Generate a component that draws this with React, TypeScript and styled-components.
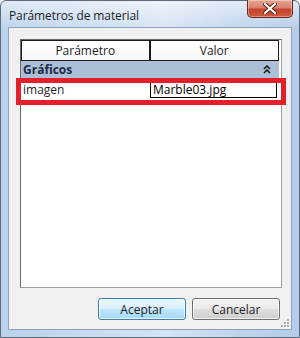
import styled, { createGlobalStyle } from "styled-components";

const GlobalStyle = createGlobalStyle`
    html, body {
        margin: 0;
        padding: 0;
        width: 300px;
        height: 338px;
        overflow: hidden;
        background: #ffffff;
    }
    * {
        box-sizing: border-box;
    }
`;

const Window = styled.div`
    width: 300px;
    height: 338px;
    display: flex;
    flex-direction: column;
    border: 1px solid #5b6b7c;
    border-radius: 6px 6px 0 0;
    background:
        linear-gradient(180deg, rgba(255,255,255,0.55) 0%, rgba(255,255,255,0) 30px),
        linear-gradient(90deg, #b9d1ea 0%, #c9dcf0 30%, #d6e4f3 55%, #bfd4ec 80%, #b4cce8 100%);
    font-family: "Open Sans", "Noto Sans", sans-serif;
`;

const TitleBar = styled.div`
    height: 26px;
    display: flex;
    align-items: flex-start;
    justify-content: space-between;
    padding-left: 8px;
    padding-right: 6px;
`;

const Title = styled.span`
    margin-top: 6px;
    font-size: 12px;
    color: #1e1e1e;
    letter-spacing: -0.1px;
`;

const CloseButton = styled.div`
    width: 46px;
    height: 18px;
    margin-top: -1px;
    display: flex;
    justify-content: center;
    align-items: center;
    border: 1px solid #6b2620;
    border-top: none;
    border-radius: 0 0 5px 5px;
    background: linear-gradient(180deg, #e8a493 0%, #d8826d 45%, #c3442c 55%, #cf5a3b 100%);
    box-shadow: inset 0 0 0 1px rgba(255,255,255,0.35);
`;

const Body = styled.div`
    flex: 1;
    margin: 0 7px 7px 7px;
    background: #f0f0f0;
    border: 1px solid #8ea3bb;
    padding: 11px 9px 0 11px;
    display: flex;
    flex-direction: column;
    position: relative;
`;

const Grid = styled.div`
    height: 249px;
    background: #ffffff;
    border: 1px solid #a0a0a0;
    border-left-color: #696969;
    border-top-color: #696969;
    display: flex;
    flex-direction: column;
    padding-right: 2px;
`;

const HeaderRow = styled.div`
    height: 21px;
    display: flex;
`;

const HeaderCell = styled.div<{ $w: number }>`
    width: ${p => p.$w}px;
    display: flex;
    align-items: center;
    justify-content: center;
    background: linear-gradient(180deg, #ffffff 0%, #f7f7f7 100%);
    border: 1px solid #1a1a1a;
    border-left: ${p => (p.$w > 130 ? "1px solid #1a1a1a" : "none")};
    font-size: 12px;
    color: #1e1e1e;
`;

const GroupRow = styled.div`
    height: 17px;
    display: flex;
    align-items: center;
    justify-content: space-between;
    padding: 0 8px 0 2px;
    background: #abbfd7;
    font-size: 12px;
    font-weight: 700;
    color: #1d2a44;
`;

const PropRow = styled.div`
    height: 23px;
    display: flex;
    align-items: center;
    border-bottom: 1px dotted #8c8c8c;
`;

const NameCell = styled.div`
    width: 129px;
    padding-left: 2px;
    font-size: 12px;
    color: #1e1e1e;
`;

const ValueInput = styled.div`
    width: 127px;
    height: 18px;
    display: flex;
    align-items: center;
    padding-left: 2px;
    background: #ffffff;
    border: 1px solid #000000;
    font-size: 12px;
    color: #000000;
`;

const Highlight = styled.div`
    position: absolute;
    left: 7px;
    top: 50px;
    width: 270px;
    height: 27px;
    border: 5px solid #e3202a;
    pointer-events: none;
`;

const ButtonBar = styled.div`
    display: flex;
    justify-content: flex-end;
    gap: 6px;
    padding-top: 10px;
    padding-right: 2px;
`;

const Button = styled.div<{ $default?: boolean }>`
    width: 88px;
    height: 22px;
    display: flex;
    align-items: center;
    justify-content: center;
    border-radius: 3px;
    font-size: 12px;
    color: #1e1e1e;
    border: 1px solid ${p => (p.$default ? "#3c7fb1" : "#707070")};
    background: ${p =>
        p.$default
            ? "linear-gradient(180deg, #eaf6fd 0%, #d9f0fc 50%, #bee6fd 51%, #a7d9f5 100%)"
            : "linear-gradient(180deg, #f2f2f2 0%, #ebebeb 50%, #dddddd 51%, #cfcfcf 100%)"};
    box-shadow: inset 0 0 0 1px rgba(255,255,255,0.7);
`;

const Grip = styled.svg`
    position: absolute;
    right: 2px;
    bottom: 2px;
`;

const App = () => {
    return (
        <>
            <GlobalStyle />
            <Window>
                <TitleBar>
                    <Title>Parámetros de material</Title>
                    <CloseButton>
                        <svg width="14" height="11" viewBox="0 0 14 11">
                            <path d="M2 1 L12 10 M12 1 L2 10" stroke="#5a1a12" strokeWidth="4" strokeLinecap="square" />
                            <path d="M2 1 L12 10 M12 1 L2 10" stroke="#ffffff" strokeWidth="2.2" strokeLinecap="square" />
                        </svg>
                    </CloseButton>
                </TitleBar>
                <Body>
                    <Grid>
                        <HeaderRow>
                            <HeaderCell $w={130} style={{ borderLeft: "1px solid #1a1a1a" }}>Parámetro</HeaderCell>
                            <HeaderCell $w={131}>Valor</HeaderCell>
                        </HeaderRow>
                        <GroupRow>
                            <span>Gráficos</span>
                            <svg width="8" height="9" viewBox="0 0 8 9">
                                <path d="M1 4 L4 1 L7 4 M1 8 L4 5 L7 8" stroke="#111" strokeWidth="1.5" fill="none" />
                            </svg>
                        </GroupRow>
                        <PropRow>
                            <NameCell>imagen</NameCell>
                            <ValueInput>Marble03.jpg</ValueInput>
                        </PropRow>
                    </Grid>
                    <ButtonBar>
                        <Button $default>Aceptar</Button>
                        <Button>Cancelar</Button>
                    </ButtonBar>
                    <Highlight />
                    <Grip width="8" height="8" viewBox="0 0 8 8">
                        <g fill="#b0b0b0">
                            <rect x="6" y="0" width="2" height="2" />
                            <rect x="3" y="3" width="2" height="2" />
                            <rect x="6" y="3" width="2" height="2" />
                            <rect x="0" y="6" width="2" height="2" />
                            <rect x="3" y="6" width="2" height="2" />
                            <rect x="6" y="6" width="2" height="2" />
                        </g>
                    </Grip>
                </Body>
            </Window>
        </>
    );
};

export default App;
